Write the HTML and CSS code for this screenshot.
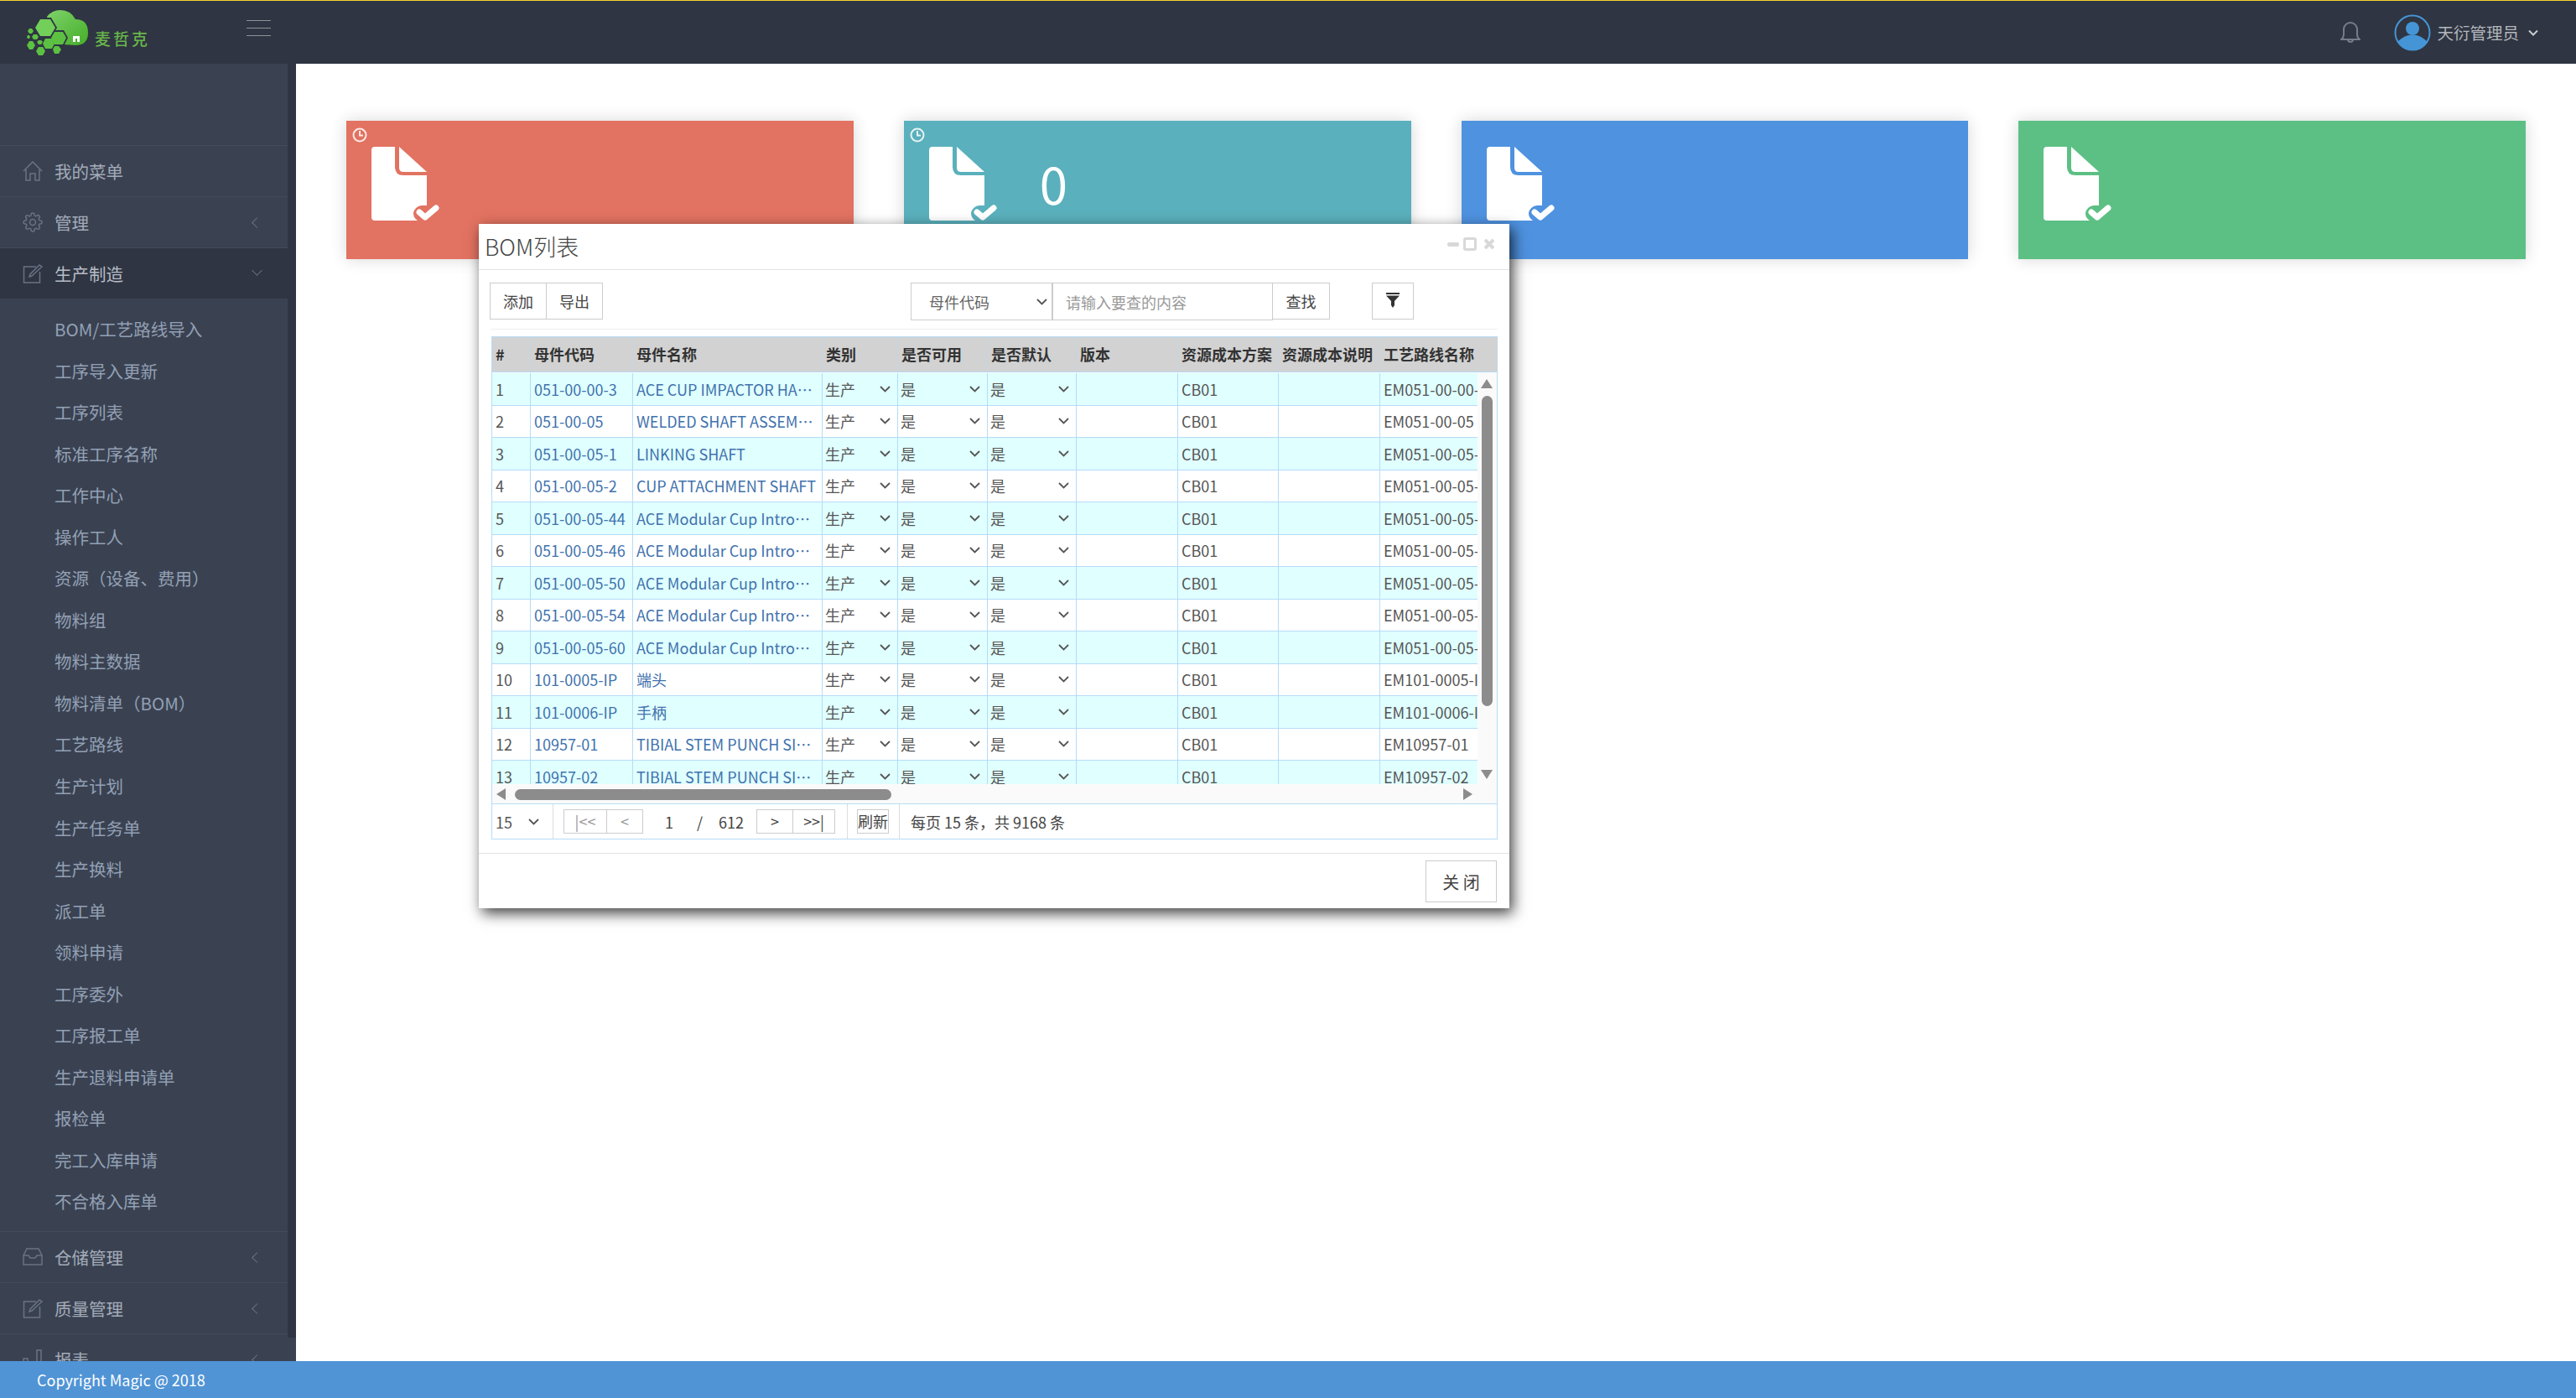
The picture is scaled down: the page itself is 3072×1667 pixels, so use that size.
FILE: index.html
```html
<!DOCTYPE html>
<html lang="zh-CN">
<head>
    <meta charset="UTF-8">
    <title>BOM列表</title>
    <link rel="stylesheet" href="styles.css">
</head>
<body>
<svg class="defs" width="0" height="0">
    <symbol id="i-home" viewBox="0 0 24 24"><path d="M1 12 12 1l11 11M4 10v13h5v-8h6v8h5V10"/></symbol>
    <symbol id="i-gear" viewBox="0 0 24 24"><circle cx="12" cy="12" r="3.500"/><path d="M19.400 15a1.650 1.650 0 0 0 .33 1.820l.06.06a2 2 0 0 1 0 2.830 2 2 0 0 1-2.830 0l-.06-.06a1.650 1.650 0 0 0-1.820-.33 1.650 1.650 0 0 0-1 1.510V21a2 2 0 0 1-2 2 2 2 0 0 1-2-2v-.09A1.650 1.650 0 0 0 9 19.400a1.650 1.650 0 0 0-1.820.33l-.06.06a2 2 0 0 1-2.830 0 2 2 0 0 1 0-2.830l.06-.06a1.650 1.650 0 0 0 .33-1.820 1.650 1.650 0 0 0-1.510-1H3a2 2 0 0 1-2-2 2 2 0 0 1 2-2h.09A1.650 1.650 0 0 0 4.600 9a1.650 1.650 0 0 0-.33-1.820l-.06-.06a2 2 0 0 1 0-2.830 2 2 0 0 1 2.830 0l.06.06a1.650 1.650 0 0 0 1.820.33H9a1.650 1.650 0 0 0 1-1.510V3a2 2 0 0 1 2-2 2 2 0 0 1 2 2v.09a1.650 1.650 0 0 0 1 1.510 1.650 1.650 0 0 0 1.820-.33l.06-.06a2 2 0 0 1 2.830 0 2 2 0 0 1 0 2.830l-.06.06a1.650 1.650 0 0 0-.33 1.820V9a1.650 1.650 0 0 0 1.510 1H21a2 2 0 0 1 2 2 2 2 0 0 1-2 2h-.09a1.650 1.650 0 0 0-1.510 1z"/></symbol>
    <symbol id="i-edit" viewBox="0 0 24 24"><path d="M16 4H1.500v19h19V10M11 15l-3 1 1-3L20 2l3 2z"/></symbol>
    <symbol id="i-inbox" viewBox="0 0 24 24"><path d="M5 2h14l4 8v11H1V10zM1 10h6l2 3h6l2-3h6"/></symbol>
    <symbol id="i-chart" viewBox="0 0 24 24"><path d="M1 23V11h5v12M9 23V15h5v8M17 23V1h5v22M1 23h22"/></symbol>
    <symbol id="i-doc" viewBox="0 0 82 89">
        <path d="M4 0H28V24Q28 34 38 34H66V70H60A11 11 0 0 0 50 79Q50 85 55 88H4Q0 88 0 84V4Q0 0 4 0Z"/>
        <path d="M33 0 66 30H38Q33 30 33 25Z"/>
        <path class="tick" d="M57 78 64 84 77 73"/>
    </symbol>
    <symbol id="i-clock" viewBox="0 0 18 18"><circle cx="9" cy="9" r="7.500"/><path d="M9 4v5.500h4"/></symbol>
</svg>

<div class="app">
    <header class="topbar">
        <div class="logo">
            <svg class="logo-mark" viewBox="0 0 74 54">
                <defs>
                    <linearGradient id="cloud" x1="0" y1="0" x2="1" y2="1">
                        <stop offset="0" stop-color="#7ed36a"/>
                        <stop offset="1" stop-color="#45ad28"/>
                    </linearGradient>
                </defs>
                <path fill="url(#cloud)" d="M30 40 24 8Q30 0 40 0 52 0 58 11 73 11 73 27 73 42 58 42Z"/>
                <g fill="#2f3542">
                    <polygon points="8,21 15,9 29,9 36,21 29,33 15,33"/>
                    <polygon points="27,33 32,24 44,24 49,33 44,43 32,43"/>
                </g>
                <g fill="#5cc043">
                    <polygon points="10,21 16,11 28,11 34,21 28,31 16,31" fill="#72cf5a"/>
                    <polygon points="29,33 33,26 43,26 47,33 43,41 33,41"/>
                    <polygon points="19,40 22,34 30,34 33,40 30,46 22,46"/>
                    <polygon points="0,42 3,37 7,37 10,42 7,47 3,47"/>
                    <polygon points="6,32 8,29 12,29 14,32 12,35 8,35"/>
                    <polygon points="12,38 14,36 17,36 19,38 17,41 14,41"/>
                    <polygon points="11,49 14,44 19,44 22,49 19,54 14,54"/>
                    <polygon points="31,47 33,43 38,43 41,47 38,52 33,52"/>
                    <polygon points="1,25 3,22 6,22 8,25 6,28 3,28"/>
                    <polygon points="0,32 1,30 3,30 4,32 3,34 1,34"/>
                </g>
                <rect x="55" y="31" width="8" height="7" fill="#fff"/>
                <rect x="58" y="34" width="2" height="4" fill="#45ad28"/>
            </svg>
            <span class="logo-text">麦哲克</span>
        </div>
        <div class="burger"><i></i><i></i><i></i></div>
        <div class="top-right">
            <svg class="bell" viewBox="0 0 24 26"><path d="M1 21q3-2 3-6V9a8 8 0 0 1 16 0v6q0 4 3 6zM9 21a3 3 0 0 0 6 0"/></svg>
            <svg class="avatar" viewBox="0 0 44 44">
                <circle cx="22" cy="22" r="20.500"/>
                <circle class="solid" cx="22" cy="17" r="8"/>
                <path class="solid" d="M4 33Q10 27 17 25H27Q34 27 40 33 33 43 22 43 11 43 4 33Z"/>
            </svg>
            <span class="user-name">天衍管理员</span>
            <svg class="user-caret" viewBox="0 0 12 8"><path d="M1 1.500 6 6.500 11 1.500"/></svg>
        </div>
    </header>

    <div class="main">
        <aside class="sidebar">
            <nav class="menu">
                <div class="menu-item"><svg class="mi"><use href="#i-home"/></svg>我的菜单</div>
                <div class="menu-item"><svg class="mi"><use href="#i-gear"/></svg>管理<span class="arrow"></span></div>
                <div class="menu-item open"><svg class="mi"><use href="#i-edit"/></svg>生产制造<span class="arrow down"></span></div>
                <ul class="submenu">
                    <li>BOM/工艺路线导入</li>
                    <li>工序导入更新</li>
                    <li>工序列表</li>
                    <li>标准工序名称</li>
                    <li>工作中心</li>
                    <li>操作工人</li>
                    <li>资源（设备、费用）</li>
                    <li>物料组</li>
                    <li>物料主数据</li>
                    <li>物料清单（BOM）</li>
                    <li>工艺路线</li>
                    <li>生产计划</li>
                    <li>生产任务单</li>
                    <li>生产换料</li>
                    <li>派工单</li>
                    <li>领料申请</li>
                    <li>工序委外</li>
                    <li>工序报工单</li>
                    <li>生产退料申请单</li>
                    <li>报检单</li>
                    <li>完工入库申请</li>
                    <li>不合格入库单</li>
                </ul>
                <div class="menu-item"><svg class="mi"><use href="#i-inbox"/></svg>仓储管理<span class="arrow"></span></div>
                <div class="menu-item"><svg class="mi"><use href="#i-edit"/></svg>质量管理<span class="arrow"></span></div>
                <div class="menu-item"><svg class="mi"><use href="#i-chart"/></svg>报表<span class="arrow"></span></div>
            </nav>
            <div class="side-strip"></div>
        </aside>

        <section class="content">
            <div class="card red">
                <svg class="clock"><use href="#i-clock"/></svg>
                <svg class="doc"><use href="#i-doc"/></svg>
            </div>
            <div class="card teal">
                <svg class="clock"><use href="#i-clock"/></svg>
                <svg class="doc"><use href="#i-doc"/></svg>
                <span class="card-num">0</span>
            </div>
            <div class="card blue"><svg class="doc"><use href="#i-doc"/></svg></div>
            <div class="card green"><svg class="doc"><use href="#i-doc"/></svg></div>
        </section>
    </div>

    <footer class="copyright">Copyright Magic @ 2018</footer>
</div>

<div class="modal">
    <div class="modal-title">
        <span class="title-text">BOM列表</span>
        <div class="win-btns">
            <i class="win-min"></i>
            <i class="win-max"></i>
            <svg class="win-close" viewBox="0 0 14 14"><path d="M2 2 12 12M12 2 2 12"/></svg>
        </div>
    </div>

    <div class="toolbar">
        <button class="btn">添加</button>
        <button class="btn joined">导出</button>
        <select class="search-field">
            <option>母件代码</option>
        </select>
        <input class="search-input" type="text" placeholder="请输入要查的内容">
        <button class="btn search-btn">查找</button>
        <button class="btn filter-btn">
            <svg viewBox="0 0 16 18"><path d="M0 0H16V2H0ZM0 3.500H16L10 10V15L8 18 6 15V10Z"/></svg>
        </button>
    </div>
    <div class="tool-line"></div>

    <div class="grid">
        <table class="grid-head">
            <colgroup><col class="c1"><col class="c2"><col class="c3"><col class="c4"><col class="c5"><col class="c6"><col class="c7"><col class="c8"><col class="c9"><col class="c10"></colgroup>
            <tr>
                <th>#</th><th>母件代码</th><th>母件名称</th><th>类别</th><th>是否可用</th><th>是否默认</th><th>版本</th><th>资源成本方案</th><th>资源成本说明</th><th>工艺路线名称</th>
            </tr>
        </table>

        <div class="grid-body">
            <div class="grid-view">
                <table class="grid-rows">
                    <colgroup><col class="c1"><col class="c2"><col class="c3"><col class="c4"><col class="c5"><col class="c6"><col class="c7"><col class="c8"><col class="c9"><col class="c10"></colgroup>
                    <tr><td>1</td><td class="link">051-00-00-3</td><td class="link name">ACE CUP IMPACTOR HANDLE</td><td><select><option>生产</option></select></td><td><select><option>是</option></select></td><td><select><option>是</option></select></td><td></td><td>CB01</td><td></td><td>EM051-00-00-3</td></tr>
                    <tr><td>2</td><td class="link">051-00-05</td><td class="link name">WELDED SHAFT ASSEMBLY</td><td><select><option>生产</option></select></td><td><select><option>是</option></select></td><td><select><option>是</option></select></td><td></td><td>CB01</td><td></td><td>EM051-00-05</td></tr>
                    <tr><td>3</td><td class="link">051-00-05-1</td><td class="link name">LINKING SHAFT</td><td><select><option>生产</option></select></td><td><select><option>是</option></select></td><td><select><option>是</option></select></td><td></td><td>CB01</td><td></td><td>EM051-00-05-1</td></tr>
                    <tr><td>4</td><td class="link">051-00-05-2</td><td class="link name">CUP ATTACHMENT SHAFT</td><td><select><option>生产</option></select></td><td><select><option>是</option></select></td><td><select><option>是</option></select></td><td></td><td>CB01</td><td></td><td>EM051-00-05-2</td></tr>
                    <tr><td>5</td><td class="link">051-00-05-44</td><td class="link name">ACE Modular Cup Introducer</td><td><select><option>生产</option></select></td><td><select><option>是</option></select></td><td><select><option>是</option></select></td><td></td><td>CB01</td><td></td><td>EM051-00-05-44</td></tr>
                    <tr><td>6</td><td class="link">051-00-05-46</td><td class="link name">ACE Modular Cup Introducer</td><td><select><option>生产</option></select></td><td><select><option>是</option></select></td><td><select><option>是</option></select></td><td></td><td>CB01</td><td></td><td>EM051-00-05-46</td></tr>
                    <tr><td>7</td><td class="link">051-00-05-50</td><td class="link name">ACE Modular Cup Introducer</td><td><select><option>生产</option></select></td><td><select><option>是</option></select></td><td><select><option>是</option></select></td><td></td><td>CB01</td><td></td><td>EM051-00-05-50</td></tr>
                    <tr><td>8</td><td class="link">051-00-05-54</td><td class="link name">ACE Modular Cup Introducer</td><td><select><option>生产</option></select></td><td><select><option>是</option></select></td><td><select><option>是</option></select></td><td></td><td>CB01</td><td></td><td>EM051-00-05-54</td></tr>
                    <tr><td>9</td><td class="link">051-00-05-60</td><td class="link name">ACE Modular Cup Introducer</td><td><select><option>生产</option></select></td><td><select><option>是</option></select></td><td><select><option>是</option></select></td><td></td><td>CB01</td><td></td><td>EM051-00-05-60</td></tr>
                    <tr><td>10</td><td class="link">101-0005-IP</td><td class="link name">端头</td><td><select><option>生产</option></select></td><td><select><option>是</option></select></td><td><select><option>是</option></select></td><td></td><td>CB01</td><td></td><td>EM101-0005-IP</td></tr>
                    <tr><td>11</td><td class="link">101-0006-IP</td><td class="link name">手柄</td><td><select><option>生产</option></select></td><td><select><option>是</option></select></td><td><select><option>是</option></select></td><td></td><td>CB01</td><td></td><td>EM101-0006-IP</td></tr>
                    <tr><td>12</td><td class="link">10957-01</td><td class="link name">TIBIAL STEM PUNCH SIZE 1</td><td><select><option>生产</option></select></td><td><select><option>是</option></select></td><td><select><option>是</option></select></td><td></td><td>CB01</td><td></td><td>EM10957-01</td></tr>
                    <tr><td>13</td><td class="link">10957-02</td><td class="link name">TIBIAL STEM PUNCH SIZE 2</td><td><select><option>生产</option></select></td><td><select><option>是</option></select></td><td><select><option>是</option></select></td><td></td><td>CB01</td><td></td><td>EM10957-02</td></tr>
                </table>
            </div>
            <div class="vbar">
                <i class="tri up"></i>
                <div class="vthumb"></div>
                <i class="tri dn"></i>
            </div>
        </div>

        <div class="hbar">
            <i class="tri lf"></i>
            <div class="hthumb"></div>
            <i class="tri rt"></i>
        </div>

        <div class="pager">
            <div class="pg-cell pg-size">
                <select><option>15</option></select>
            </div>
            <div class="pg-cell pg-nav">
                <button class="pg-btn off w-first">|&lt;&lt;</button>
                <button class="pg-btn off w-prev">&lt;</button>
                <span class="pg-no">1</span>
                <span class="pg-slash">/</span>
                <span class="pg-total">612</span>
                <button class="pg-btn w-next">&gt;</button>
                <button class="pg-btn w-last">&gt;&gt;|</button>
            </div>
            <div class="pg-cell pg-refresh"><button class="pg-btn">刷新</button></div>
            <div class="pg-info">每页 15 条，共 9168 条</div>
        </div>
    </div>

    <div class="modal-foot">
        <button class="btn close-btn">关 闭</button>
    </div>
</div>
</body>
</html>
```

FILE: styles.css
```css
* {
    box-sizing: border-box;
}
html, body {
    margin: 0;
    height: 100%;
    overflow: hidden;
}
body {
    font-family: "Noto Sans CJK SC", "Noto Sans", sans-serif;
    font-size: 18px;
    color: #555;
    background: #fff;
}
.defs {
    position: absolute;
}
.app {
    display: flex;
    flex-direction: column;
    height: 100vh;
}
select {
    appearance: none;
    border-radius: 0;
    background: url("data:image/svg+xml,%3Csvg xmlns='http://www.w3.org/2000/svg' viewBox='0 0 13 8'%3E%3Cpath d='M1 1l5.500 5.500L12 1' fill='none' stroke='%23555' stroke-width='1.800'/%3E%3C/svg%3E") no-repeat right 7px center / 13px 8px;
}

/* top bar */
.topbar {
    flex: none;
    height: 76px;
    display: flex;
    align-items: center;
    background: #2f3542;
    border-top: 1px solid #f5d132;
}
.logo {
    width: 294px;
    display: flex;
    align-items: flex-start;
    padding: 11px 0 0 32px;
    height: 75px;
}
.logo-mark {
    width: 74px;
    height: 54px;
}
.logo-text {
    margin: 20px 0 0 7px;
    font-size: 19px;
    line-height: 28px;
    letter-spacing: 3px;
    font-weight: 500;
    color: #68b64a;
}
.burger {
    display: flex;
    flex-direction: column;
    gap: 8px;
    width: 29px;
    margin-top: -10px;
}
.burger i {
    height: 1px;
    background: #8d929a;
}
.top-right {
    margin-left: auto;
    display: flex;
    align-items: center;
    padding-right: 45px;
}
.bell {
    width: 24px;
    height: 26px;
    margin-right: 40px;
    fill: none;
    stroke: #767d89;
    stroke-width: 2;
}
.avatar {
    width: 44px;
    height: 44px;
    margin-right: 7px;
    fill: none;
    stroke: #4595d6;
    stroke-width: 2;
}
.avatar .solid {
    fill: #4595d6;
    stroke: none;
}
.user-name {
    font-size: 19.500px;
    color: #b3b7bd;
}
.user-caret {
    width: 12px;
    height: 8px;
    margin-left: 11px;
    fill: none;
    stroke: #c9ccd0;
    stroke-width: 2;
}

/* sidebar */
.main {
    flex: 1;
    display: flex;
    min-height: 0;
}
.sidebar {
    flex: none;
    width: 353px;
    display: flex;
    background: #3a4252;
    overflow: hidden;
}
.menu {
    width: 343px;
    padding-top: 97px;
}
.side-strip {
    width: 10px;
    margin-bottom: 28px;
    background: #2f3542;
}
.menu-item {
    height: 61px;
    display: flex;
    align-items: center;
    padding-left: 27px;
    border-top: 1px solid #434b5b;
    font-size: 20.500px;
    color: #a3abb8;
}
.menu-item.open {
    background: #2f3542;
    color: #b6bcc6;
}
.mi {
    width: 24px;
    height: 24px;
    margin-right: 14px;
    fill: none;
    stroke: #697384;
    stroke-width: 1.500;
}
.arrow {
    margin-left: auto;
    margin-right: 32px;
    width: 9px;
    height: 9px;
    border-left: 1.500px solid #697384;
    border-bottom: 1.500px solid #697384;
    transform: rotate(45deg);
}
.arrow.down {
    transform: rotate(-45deg);
    margin-top: -8px;
}
.submenu {
    list-style: none;
    margin: 0;
    padding: 12px 0 10px 65px;
}
.submenu li {
    height: 49.550px;
    line-height: 49.550px;
    font-size: 20.500px;
    color: #93a0b4;
}

/* cards */
.content {
    flex: 1;
    display: grid;
    grid-template-columns: repeat(4, 1fr);
    gap: 60px;
    align-items: start;
    padding: 68px 60px 0;
}
.card {
    position: relative;
    height: 165px;
    box-shadow: 0 0 18px rgba(0, 0, 0, .16);
}
.red { background: #e27261; }
.teal { background: #5ab0bc; }
.blue { background: #4f92e0; }
.green { background: #5cc084; }
.doc {
    position: absolute;
    left: 30px;
    top: 31px;
    width: 82px;
    height: 89px;
    fill: #fff;
}
#i-doc .tick {
    fill: none;
    stroke: #fff;
    stroke-width: 7;
    stroke-linecap: round;
    stroke-linejoin: round;
}
.clock {
    position: absolute;
    left: 7px;
    top: 8px;
    width: 18px;
    height: 18px;
    fill: none;
    stroke: rgba(255, 255, 255, .85);
    stroke-width: 2;
}
.card-num {
    position: absolute;
    left: 162px;
    top: 30px;
    font-size: 60px;
    line-height: 88px;
    color: #fff;
}

/* modal */
.modal {
    position: absolute;
    left: 571px;
    top: 267px;
    width: 1229px;
    height: 816px;
    background: #fff;
    box-shadow: 4px 6px 16px rgba(0, 0, 0, .75);
}
.modal-title {
    height: 55px;
    display: flex;
    align-items: center;
    padding: 0 17px 0 7px;
    border-bottom: 1px solid #e2e2e2;
}
.title-text {
    font-size: 27px;
    line-height: 52px;
    color: #444;
    font-weight: 300;
    margin-top: -1px;
}
.win-btns {
    margin-left: auto;
    display: flex;
    align-items: center;
    gap: 5px;
    margin-top: -6px;
}
.win-min {
    width: 14px;
    height: 5px;
    border-radius: 2px;
    background: #d8d8d8;
}
.win-max {
    width: 16px;
    height: 16px;
    border: 3px solid #d8d8d8;
    border-radius: 3px;
}
.win-close {
    width: 14px;
    height: 14px;
    margin-left: 3px;
    fill: none;
    stroke: #d8d8d8;
    stroke-width: 4;
}
.toolbar {
    display: flex;
    align-items: flex-start;
    padding: 15px 0 0 13px;
}
.btn {
    height: 44px;
    padding: 0;
    border: 1px solid #ccc;
    background: #fff;
    font: inherit;
    color: #444;
    width: 68px;
}
.joined {
    margin-left: -1px;
}
.search-field {
    width: 170px;
    height: 45px;
    margin-left: 367px;
    padding-left: 21px;
    border: 1px solid #ccc;
    border-right-width: 2px;
    background-color: #fff;
    background-position: right 5px center;
    font: inherit;
    color: #666;
}
.search-input {
    width: 262px;
    height: 45px;
    padding: 0 15px;
    border: 1px solid #ccc;
    border-left: 0;
    outline: 0;
    font: inherit;
}
.search-input::placeholder {
    color: #999;
}
.search-btn {
    border-left: 0;
}
.filter-btn {
    width: 50px;
    margin-left: 50px;
}
.filter-btn svg {
    display: block;
    width: 16px;
    height: 18px;
    margin: 0 auto 2px;
    fill: #333;
}
.tool-line {
    height: 1px;
    margin: 10px 14px 8px 15px;
    background: #eee;
}

/* grid */
.grid {
    margin: 0 14px 0 15px;
    width: 1200px;
    border: 1px solid #b5dcf8;
}
.grid table {
    width: 1199px;
    table-layout: fixed;
    border-collapse: separate;
    border-spacing: 0;
}
.c1 { width: 46px; }
.c2 { width: 122px; }
.c3 { width: 226px; }
.c4 { width: 90px; }
.c5 { width: 107px; }
.c6 { width: 106px; }
.c7 { width: 121px; }
.c8 { width: 120px; }
.c9 { width: 121px; }
.c10 { width: 140px; }
.grid-head th {
    height: 42px;
    padding: 0 0 2px 4px;
    text-align: left;
    font-size: 18px;
    color: #333;
    background: #d2d2d2;
    border-right: 1px solid #c3d6e4;
    border-bottom: 1px solid #b5dcf8;
    white-space: nowrap;
}
.grid-body {
    display: flex;
    height: 492px;
    padding-top: 1px;
    background: #fafafa;
}
.grid-view {
    width: 1175px;
    height: 490px;
    overflow: hidden;
}
.grid-rows td {
    height: 38.500px;
    padding: 0 0 0 4px;
    border-right: 1px solid #b5dcf8;
    border-bottom: 1px solid #b5dcf8;
    white-space: nowrap;
    overflow: hidden;
    color: #555;
}
.grid-rows tr:nth-child(odd) td {
    background: #e0ffff;
}
.grid-rows tr:nth-child(even) td {
    background: #fff;
}
.grid-rows td.link {
    color: #4172ad;
}
.grid-rows td.name {
    text-overflow: ellipsis;
    padding-right: 6px;
}
.grid-rows select {
    width: 100%;
    margin-left: -1px;
    padding: 0;
    border: 0;
    font: inherit;
    color: #555;
}
.vbar {
    position: relative;
    flex: 1;
}
.vthumb {
    position: absolute;
    left: 5px;
    top: 27px;
    width: 13px;
    height: 370px;
    border-radius: 7px;
    background: #8c8c8c;
}
.tri {
    position: absolute;
    width: 0;
    height: 0;
    border-style: solid;
    border-color: transparent;
}
.tri.up {
    left: 4px;
    top: 7px;
    border-width: 0 7.500px 11px;
    border-bottom-color: #8c8c8c;
}
.tri.dn {
    left: 4px;
    top: 473px;
    border-width: 11px 7.500px 0;
    border-top-color: #8c8c8c;
}
.hbar {
    position: relative;
    height: 23px;
    background: #fafafa;
    border-bottom: 1px solid #b5dcf8;
}
.hthumb {
    position: absolute;
    left: 27px;
    top: 5px;
    width: 449px;
    height: 13px;
    border-radius: 7px;
    background: #8c8c8c;
}
.tri.lf {
    left: 5px;
    top: 4px;
    border-width: 7.500px 11px 7.500px 0;
    border-right-color: #8c8c8c;
}
.tri.rt {
    left: 1158px;
    top: 4px;
    border-width: 7.500px 0 7.500px 11px;
    border-left-color: #8c8c8c;
}
.pager {
    display: flex;
    align-items: stretch;
    height: 41px;
}
.pg-cell {
    display: flex;
    align-items: center;
    border-right: 1px solid #ddd;
}
.pg-size {
    width: 73px;
    padding-left: 4px;
}
.pg-size select {
    width: 60px;
    padding: 0;
    border: 0;
    background-position: right 8px center;
    font: inherit;
    color: #555;
}
.pg-nav {
    width: 351px;
    padding-left: 12px;
}
.pg-btn {
    height: 29px;
    padding: 0;
    border: 1px solid #ccc;
    background: #fff;
    font: inherit;
    line-height: 25px;
    color: #444;
}
.pg-btn.off {
    color: #999;
}
.w-first { width: 52px; }
.w-prev { width: 44px; margin-left: -1px; }
.w-next { width: 44px; }
.w-last { width: 51px; margin-left: -1px; }
.pg-no {
    margin-left: 26px;
    color: #444;
}
.pg-slash {
    margin-left: 28px;
    color: #444;
}
.pg-total {
    margin-left: 19px;
    margin-right: 15px;
    color: #444;
}
.pg-refresh {
    width: 62px;
    padding-left: 11px;
}
.pg-refresh .pg-btn {
    width: 38px;
    white-space: nowrap;
}
.pg-info {
    align-self: center;
    margin-left: 13px;
    color: #444;
}
.modal-foot {
    display: flex;
    justify-content: flex-end;
    margin-top: 16px;
    padding: 8px 15px 0 0;
    border-top: 1px solid #e2e2e2;
}
.close-btn {
    width: 85px;
    height: 50px;
    font-size: 20px;
}

/* footer */
.copyright {
    flex: none;
    height: 44px;
    padding-left: 44px;
    line-height: 44px;
    font-size: 18px;
    color: #fff;
    background: #5094d5;
    position: relative;
}
```
